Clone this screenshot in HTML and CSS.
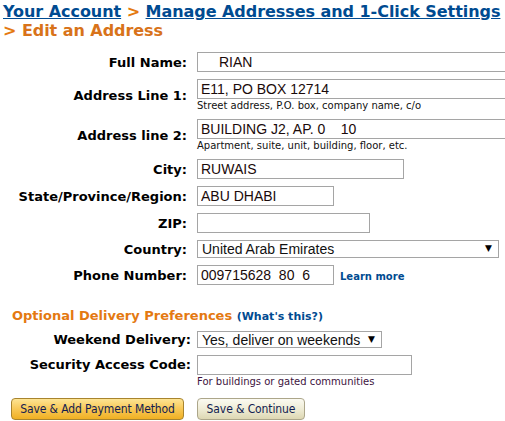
FILE: index.html
```html
<!DOCTYPE html>
<html lang="en">
<head>
<meta charset="UTF-8">
<title>Edit an Address</title>
<link rel="stylesheet" href="styles.css">
</head>
<body>

<div id="pageTitle">
  <a href="#">Your Account</a> <span class="sep">&gt;</span> <a href="#">Manage Addresses and 1-Click Settings</a>
  <span class="current"><span class="sep">&gt;</span> Edit an Address</span>
</div>

<div class="form-grid">
  <label for="fullName">Full Name:</label>
  <div class="field"><input type="text" id="fullName" class="wide pad-name" value="RIAN"></div>

  <label for="addr1">Address Line 1:</label>
  <div class="field">
    <input type="text" id="addr1" class="wide" value="E11, PO BOX 12714">
    <div class="hint">Street address, P.O. box, company name, c/o</div>
  </div>

  <label for="addr2">Address line 2:</label>
  <div class="field">
    <input type="text" id="addr2" class="wide" value="BUILDING J2, AP. 0    10">
    <div class="hint">Apartment, suite, unit, building, floor, etc.</div>
  </div>

  <label for="city">City:</label>
  <div class="field"><input type="text" id="city" class="city" value="RUWAIS"></div>

  <label for="state">State/Province/Region:</label>
  <div class="field"><input type="text" id="state" class="short" value="ABU DHABI"></div>

  <label for="zip">ZIP:</label>
  <div class="field"><input type="text" id="zip" class="zip" value=""></div>

  <label for="country">Country:</label>
  <div class="field">
    <div class="select-wrap country">
      <select id="country"><option>United Arab Emirates</option></select>
    </div>
  </div>

  <label for="phone">Phone Number:</label>
  <div class="field inline">
    <input type="text" id="phone" class="short" value="009715628  80  6">
    <a href="#" class="learn">Learn more</a>
  </div>
</div>

<h3 class="opt-title">Optional Delivery Preferences <a href="#">(What's this?)</a></h3>

<div class="form-grid second">
  <label for="weekend">Weekend Delivery:</label>
  <div class="field">
    <div class="select-wrap weekend">
      <select id="weekend"><option>Yes, deliver on weekends</option></select>
    </div>
  </div>

  <label for="sac" class="top">Security Access Code:</label>
  <div class="field">
    <input type="text" id="sac" class="sac" value="">
    <div class="hint gated">For buildings or gated communities</div>
  </div>
</div>

<div class="buttons">
  <button class="btn-gold">Save &amp; Add Payment Method</button>
  <button class="btn-plain">Save &amp; Continue</button>
</div>

</body>
</html>
```

FILE: styles.css
```css
body {
  margin: 0;
  padding: 0 0 0 3px;
  font-family: "DejaVu Sans", Verdana, sans-serif;
  color: #000;
  background: #fff;
  overflow: hidden;
}

#pageTitle {
  font-size: 16px;
  font-weight: bold;
  line-height: 19px;
  padding-top: 2px;
  letter-spacing: -0.05px;
  white-space: nowrap;
}

#pageTitle a {
  color: #004b91;
}

#pageTitle .sep {
  color: #e47911;
}

#pageTitle .current {
  display: block;
  color: #d8731a;
}

.form-grid {
  display: grid;
  grid-template-columns: 184px 1fr;
  column-gap: 10px;
  row-gap: 7px;
  align-items: center;
  margin-top: 12px;
}

.form-grid label {
  font-size: 13px;
  font-weight: bold;
  text-align: right;
  white-space: nowrap;
}

.field input {
  display: block;
  box-sizing: border-box;
  height: 20px;
  border: 1px solid #a5a5a5;
  padding: 0 3px;
  margin: 0;
  font-family: "Liberation Sans", Arial, sans-serif;
  font-size: 14px;
  color: #1a0a0a;
}

.wide { width: 320px; }
.pad-name { padding-left: 21px !important; }
.city { width: 207px; }
.short { width: 137px; }
.zip { width: 173px; }
.sac { width: 215px; }

.field.inline {
  display: flex;
  align-items: center;
  gap: 6px;
}

.hint {
  font-size: 10px;
  line-height: 12px;
  margin-top: 1px;
  color: #111;
}

.hint.gated {
  color: #3d1440;
}

.learn {
  font-size: 10px;
  font-weight: bold;
  color: #004b91;
  text-decoration: none;
  padding-top: 2px;
}

.select-wrap {
  position: relative;
}

.select-wrap select {
  display: block;
  box-sizing: border-box;
  width: 100%;
  appearance: none;
  -webkit-appearance: none;
  background: #fff;
  border: 1px solid #a5a5a5;
  border-radius: 0;
  padding: 0 0 0 4px;
  font-family: "Liberation Sans", Arial, sans-serif;
  font-size: 14px;
  color: #111;
}

.select-wrap::after {
  content: "\25BC";
  position: absolute;
  right: 7px;
  top: 3px;
  font-size: 9px;
  color: #000;
}

.country { width: 302px; }
.country select { height: 18px; }

.weekend { width: 185px; }
.weekend select { height: 17px; }

.opt-title {
  margin: 23px 0 0 9px;
  font-size: 13px;
  font-weight: bold;
  color: #e47911;
  line-height: 16px;
}

.opt-title a {
  font-size: 11px;
  color: #004b91;
  text-decoration: none;
}

.form-grid.second {
  grid-template-columns: 188px 1fr;
  column-gap: 6px;
  margin-top: 6px;
}

.form-grid.second label.top {
  align-self: start;
  padding-top: 2px;
}

.buttons {
  display: flex;
  gap: 13px;
  margin: 10px 0 0 8px;
}

.buttons button {
  height: 22px;
  border-radius: 4px;
  padding: 0;
  font-family: "DejaVu Sans", sans-serif;
  font-stretch: condensed;
  font-size: 12px;
  letter-spacing: -0.1px;
  white-space: nowrap;
  color: #121c50;
  cursor: pointer;
}

.btn-gold {
  width: 173px;
  background: linear-gradient(#fde493, #f8c856 50%, #f0b023);
  border: 1px solid #a8842e;
}

.btn-plain {
  width: 108px;
  background: linear-gradient(#fbfaf1, #efecd6 50%, #ddd7b3);
  border: 1px solid #aca68a;
}
```
